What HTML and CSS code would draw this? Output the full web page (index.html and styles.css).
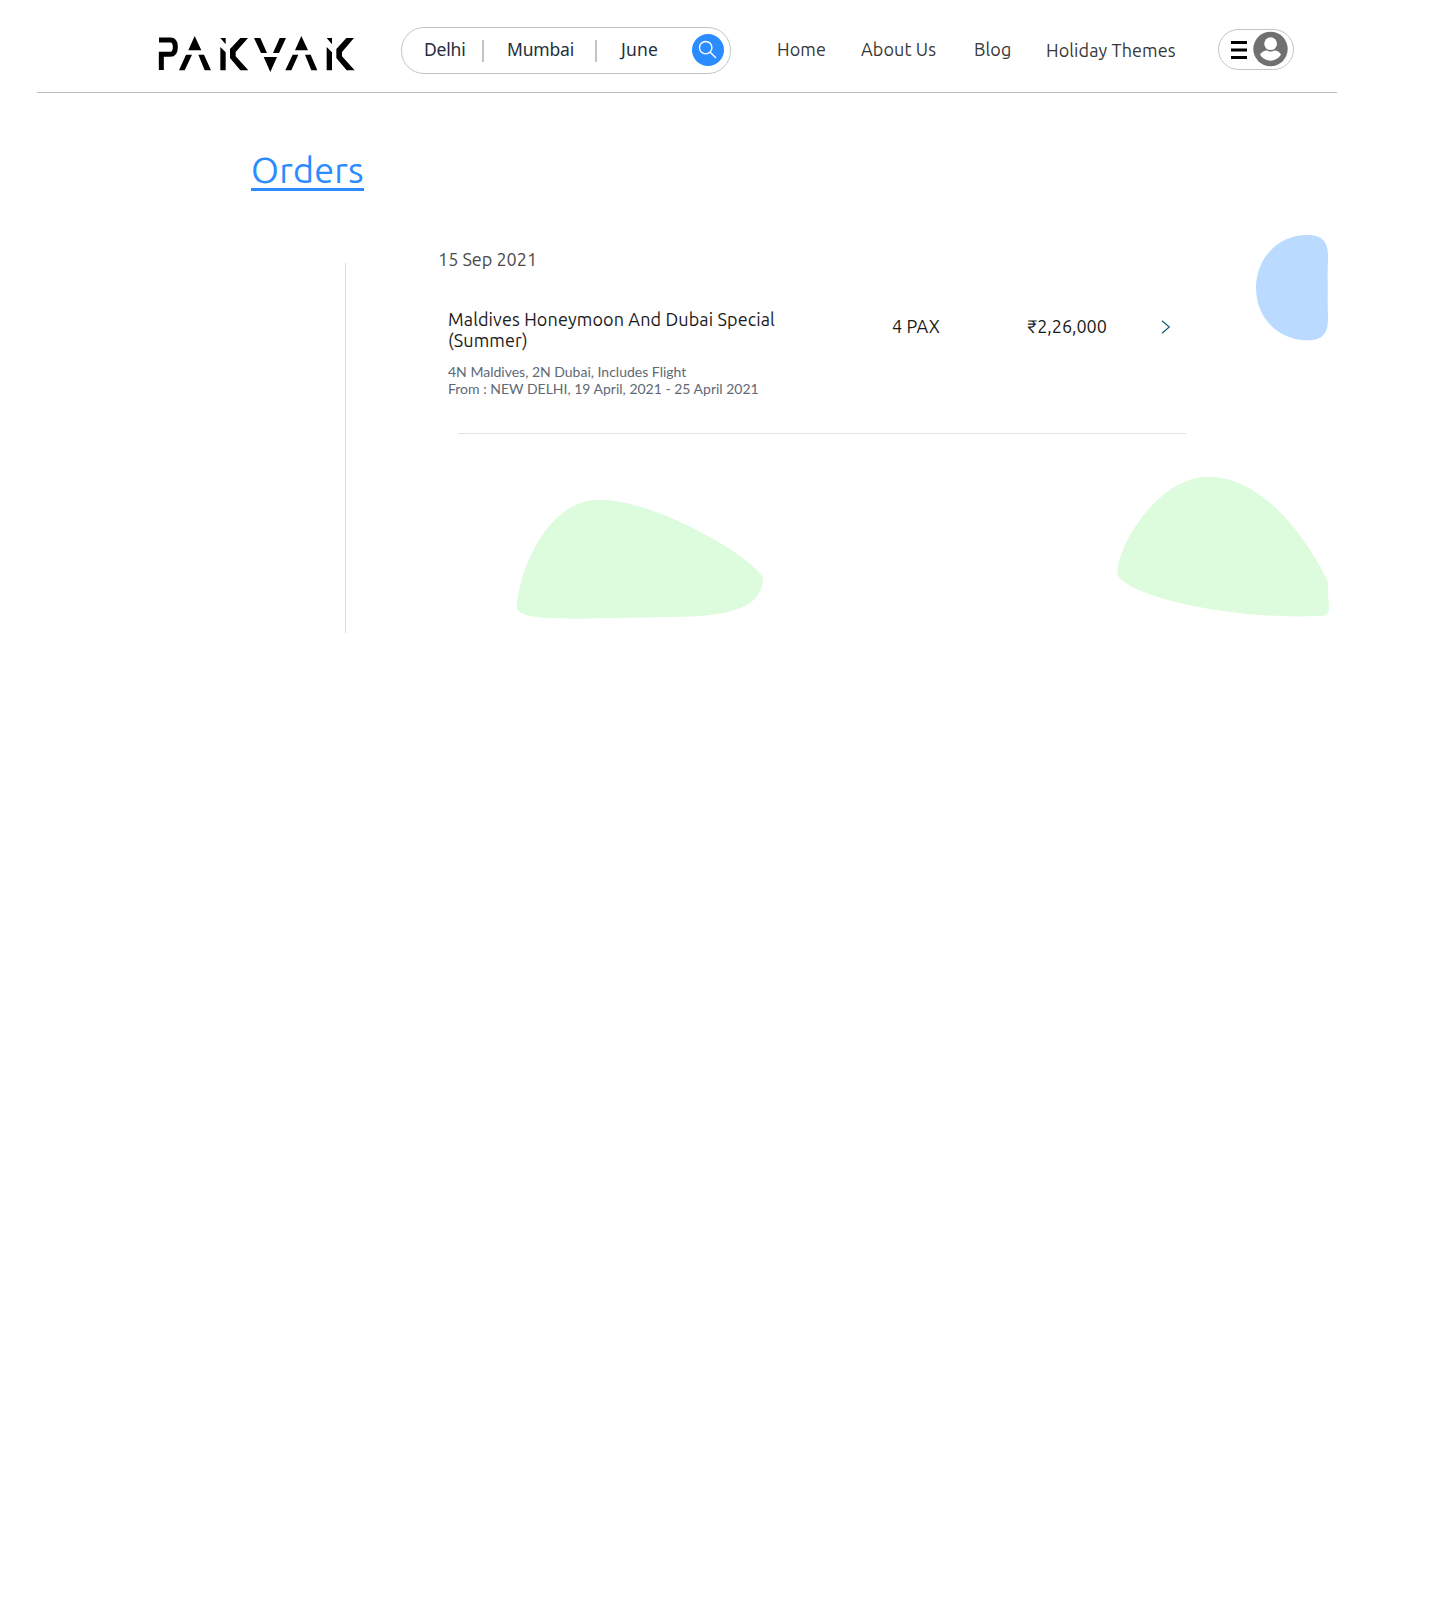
FILE: index.html
```html
<!DOCTYPE html>
<html lang="en">
<head>
<meta charset="utf-8">
<title>Pakvak – Orders</title>
<link rel="stylesheet" href="styles.css">
</head>
<body>
<header class="header">
  <a class="logo" aria-label="Pakvak">
    <svg width="198" height="38" viewBox="54 45 594 114">
      <path d="M57 60H91Q106 60 106 81Q106 103 91 103H64V150" fill="none" stroke="#000" stroke-width="15"/>
      <path d="M164 48L184 91H145ZM138 104H156L134 151H117ZM175 104H192L213 151H194ZM241 54H257V73ZM241 81L257 97V151H241ZM301 54H324L287 96V109L325 151H301L270 114V87ZM342 54H361L381 99H363ZM419 54H438L417 99H399ZM371 111H411L391 156ZM484 48L504 91H465ZM458 104H475L454 151H436ZM495 104H512L532 151H514ZM560 54H576V73ZM560 81L576 97V151H560ZM619 54H642L606 96V109L644 151H620L589 114V87Z"/>
    </svg>
  </a>
  <form class="search">
    <span class="field delhi">Delhi</span>
    <i class="bar"></i>
    <span class="field mumbai">Mumbai</span>
    <i class="bar"></i>
    <span class="field june">June</span>
    <span class="go">
      <svg width="32" height="32" viewBox="0 0 32 32" fill="none" stroke="#fff" stroke-width="1.4"><circle cx="13.7" cy="13.7" r="6.2"/><path d="M18.2 18.2L24 24"/></svg>
    </span>
  </form>
  <nav class="nav">
    <a class="home">Home</a>
    <a class="about">About Us</a>
    <a class="blog">Blog</a>
    <a class="themes">Holiday Themes</a>
  </nav>
  <div class="account">
    <svg width="74" height="39" viewBox="0 0 74 39">
      <path d="M12 11h16v3H12zM12 18.500h16v3H12zM12 26h16v3H12z"/>
      <circle cx="51.5" cy="19" r="17.2" fill="#707070"/>
      <circle cx="51.6" cy="13.7" r="6.4" fill="#fff"/>
      <path d="M41 24.5C43.5 21 47 19.8 49 20.9Q51.6 22.300 54.200 20.900C56.500 19.800 60 21 62 24.500C59.500 28.500 55.500 30.700 51.500 30.700S43.500 28.500 41 24.500Z" fill="#fff"/>
    </svg>
  </div>
</header>
<main class="main">
  <h1 class="title"><span class="underlined">Orders</span></h1>
  <section class="orders">
    <div class="list">
      <p class="date">15 Sep 2021</p>
      <article class="order">
        <div class="info">
          <h2 class="name">Maldives Honeymoon And Dubai Special<br>(Summer)</h2>
          <p class="detail">4N Maldives, 2N Dubai, Includes Flight<br>From : NEW DELHI, 19 April, 2021 - 25 April 2021</p>
        </div>
        <span class="pax">4 PAX</span>
        <span class="price">₹2,26,000</span>
        <svg class="chevron" width="10" height="14" viewBox="0 0 10 14" fill="none" stroke="#1b587c" stroke-width="1.2"><path d="M1 .7L8.300 7L1 13.300"/></svg>
      </article>
      <hr class="rule">
    </div>
  </section>
  <svg class="blob blue" width="74" height="108" viewBox="48 44 222 324"><path d="M202 44C248 44 264 66 264 105C264 145 262 165 263.500 205C262 240 264 265 264 297C264 340 248 360 202 360C112 360 48 290 48 203C48 115 112 44 202 44Z"/></svg>
  <svg class="blob right" width="214" height="142" viewBox="50 46 642 426"><path d="M51 334C54 250 175 48 325 48C480 48 613 218 684 366C682 395 685 420 686 447C685 462 672 466 650 466C380 478 51 400 51 334Z"/></svg>
  <svg class="blob left" width="249" height="121" viewBox="48 57 747 363"><path d="M50 382C56 276 140 59 298 59C470 59 766 235 789 295C788 365 725 410 540 410C450 411 330 415 220 416C115 416 50 408 50 382Z"/></svg>
</main>
</body>
</html>
```
FILE: styles.css
```css
* { box-sizing: border-box; }
body { margin: 0; background: #fff; font-family: Ubuntu, "Noto Sans", sans-serif; font-size: 18px; line-height: 21px; letter-spacing: .1px; color: #1a1a1a; }
h1, h2, p { margin: 0; font-weight: 400; font-size: inherit; }
svg { display: block; }
a, span, p, h2 { white-space: nowrap; }

.header { display: flex; align-items: flex-start; width: 1300px; height: 93px; margin-left: 37px; border-bottom: 1px solid #bdbdbd; }
.logo { margin: 35px 0 0 121px; }

.search { display: flex; align-items: center; width: 330px; height: 47px; margin: 27px 0 0 45px; padding: 0 6px 1px 22px; border: 1px solid #c4c4c4; border-radius: 23px; font-family: "Noto Sans", sans-serif; font-size: 17.5px; letter-spacing: -.2px; color: #232f3e; }
.field { padding-bottom: 1px; }
.delhi { width: 58px; }
.bar { width: 2px; height: 22px; margin-top: 1px; background: #c4c4c4; }
.mumbai { width: 111px; padding-left: 23px; }
.june { width: 95px; padding-left: 24px; letter-spacing: .2px; }
.go { width: 32px; height: 32px; border-radius: 50%; background: #2a8cff; }

.nav { display: flex; margin: 39px 0 0 46px; color: #383838; }
.home { width: 84px; }
.about { width: 113px; }
.blog { width: 72px; }
.themes { width: 172px; padding-top: 1px; }
.account { width: 76px; height: 41px; margin-top: 29px; border: 1px solid #c4c4c4; border-radius: 21px; }

.main { position: relative; width: 1440px; }
.title { padding: 56px 0 0 251px; font-size: 36px; line-height: 42px; letter-spacing: .2px; color: #2a8cff; }
.underlined { display: inline-block; height: 42px; border-bottom: 3px solid #2a8cff; line-height: 41px; }
.orders { display: flow-root; height: 370px; margin: 72px 0 0 345px; border-left: 1px solid #ddd; }
.list { width: 840px; margin-top: -14px; }
.date { margin-left: 92px; letter-spacing: 0; color: #4a4a4a; }
.order { display: flex; margin: 39px 0 0 102px; }
.info { width: 444px; }
.name { letter-spacing: .12px; }
.detail { margin-top: 12px; font-family: Lato, sans-serif; font-size: 14px; line-height: 17px; letter-spacing: 0; color: #606875; }
.pax { width: 135px; margin-top: 7px; }
.price { width: 134px; margin-top: 7px; letter-spacing: 0; }
.chevron { margin-top: 11px; }
.rule { height: 1px; margin: 36px 0 0 112px; border: 0; background: #e3e3e3; }

.blob { position: absolute; fill: #dcfcdd; }
.blue { left: 1256px; top: 142px; fill: #badbff; }
.right { left: 1117px; top: 383px; }
.left { left: 516px; top: 406px; }
```
